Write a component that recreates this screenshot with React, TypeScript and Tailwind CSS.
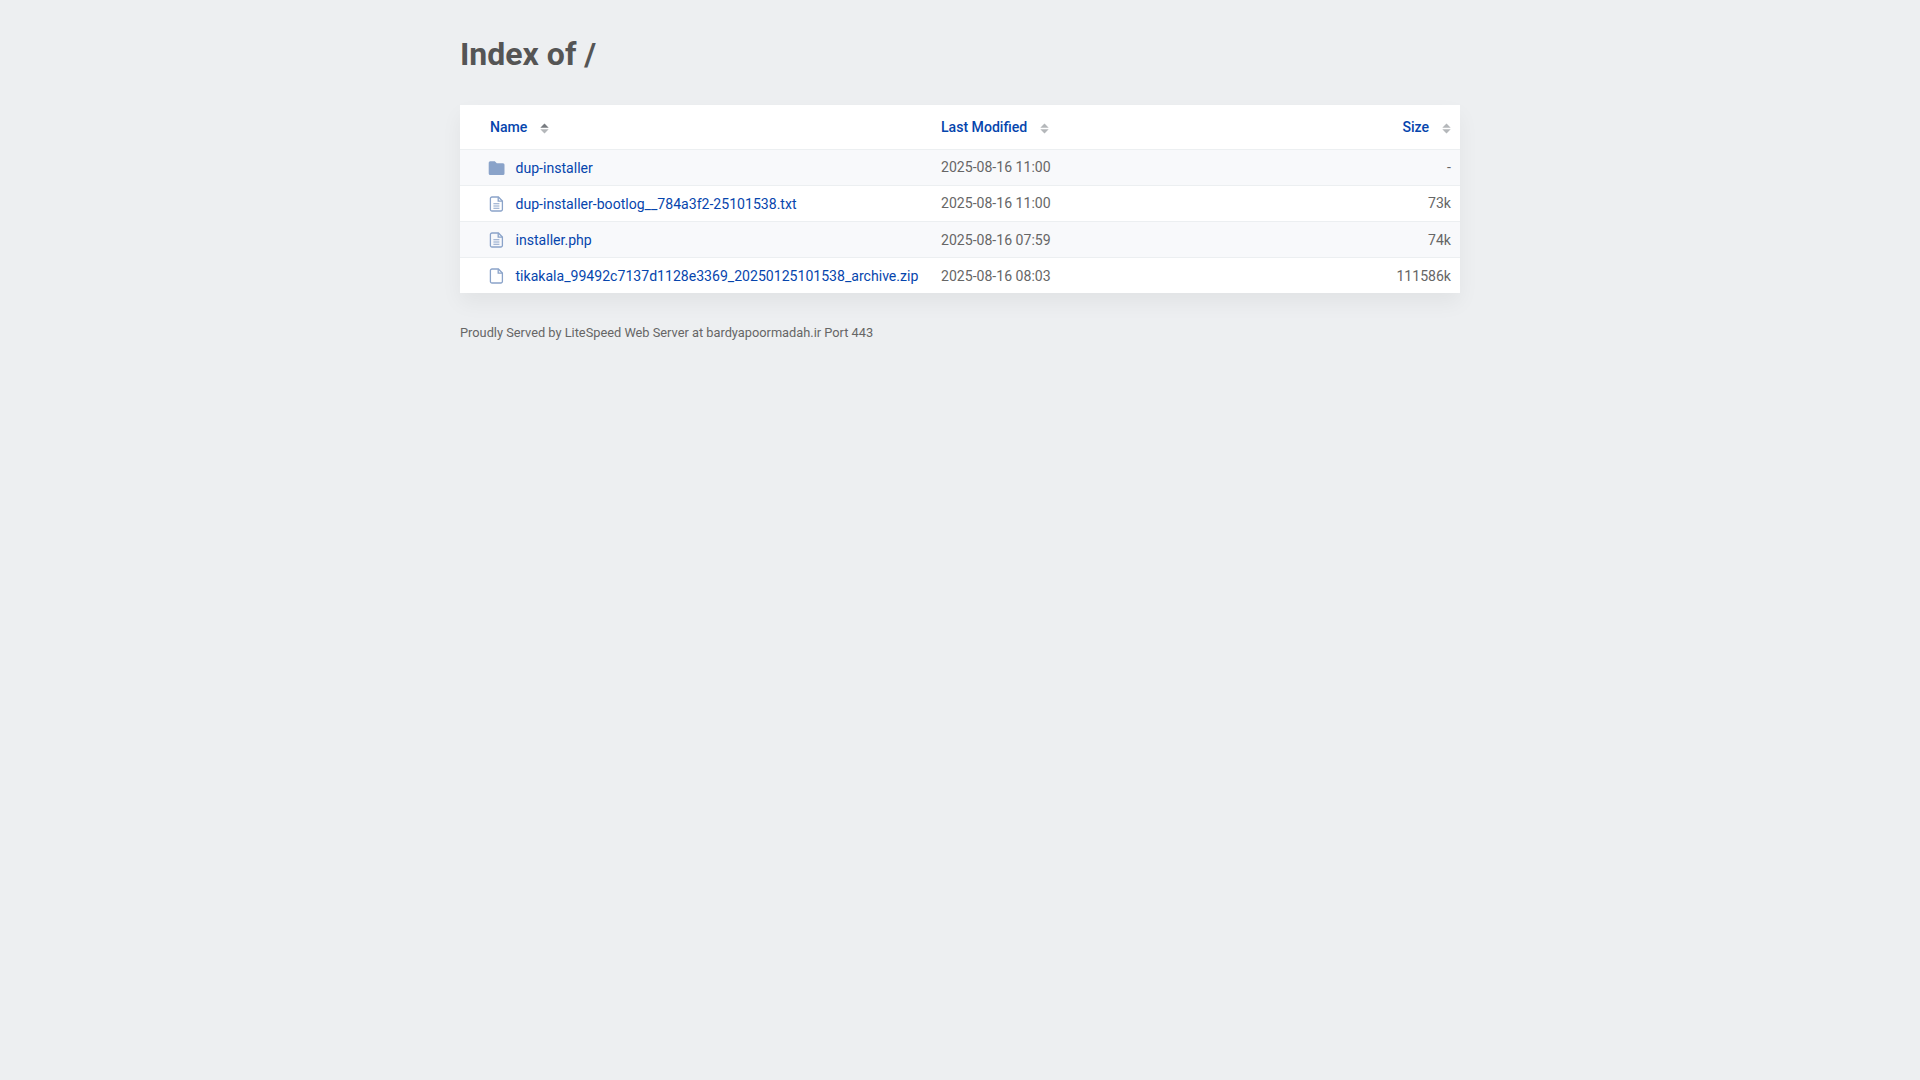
const rows = [
  { icon: "folder", name: "dup-installer", date: "2025-08-16 11:00", size: "-" },
  { icon: "text", name: "dup-installer-bootlog__784a3f2-25101538.txt", date: "2025-08-16 11:00", size: "73k" },
  { icon: "text", name: "installer.php", date: "2025-08-16 07:59", size: "74k" },
  { icon: "file", name: "tikakala_99492c7137d1128e3369_20250125101538_archive.zip", date: "2025-08-16 08:03", size: "111586k" },
];

function Sort({ active }: { active?: boolean }) {
  return (
    <svg width="9" height="11" viewBox="0 0 9 11" className="ml-[13px] mt-[3px] shrink-0">
      <path d="M4.5 0.5 L8.7 4.7 H0.3 Z" fill={active ? "#777b80" : "#b4b7ba"} />
      <path d="M0.3 6.3 H8.7 L4.5 10.5 Z" fill="#b4b7ba" />
    </svg>
  );
}

function Icon({ kind }: { kind: string }) {
  if (kind === "folder") {
    return (
      <svg width="16" height="14" viewBox="0 0 16 14" className="shrink-0 overflow-visible">
        <path d="M1.2 0.2 H5.8 L7.8 2.2 H14 A1.5 1.5 0 0 1 15.5 3.7 V12.4 A1.5 1.5 0 0 1 14 13.9 H1.2 A1.5 1.5 0 0 1 -0.3 12.4 V1.7 A1.5 1.5 0 0 1 1.2 0.2 Z" fill="#8aa3c9" />
      </svg>
    );
  }
  return (
    <svg width="16" height="16" viewBox="0 0 16 16" fill="none" className="shrink-0">
      <path d="M3 1 H9.4 L13.4 5 V13.4 A1.6 1.6 0 0 1 11.8 15 H3 A1.6 1.6 0 0 1 1.4 13.4 V2.6 A1.6 1.6 0 0 1 3 1 Z" stroke="#8aa3c9" strokeWidth="1.3" />
      <path d="M9.2 1.2 V5.2 H13.2" stroke="#8aa3c9" strokeWidth="1.3" />
      {kind === "text" && <path d="M4.4 7.8 H10.4 M4.4 10 H10.4 M4.4 12.2 H10.4" stroke="#8aa3c9" strokeWidth="1.1" />}
    </svg>
  );
}

export default function App() {
  return (
    <div className="min-h-screen bg-[#edeff1] font-['Roboto',sans-serif] text-[14.08px] text-[#666666]">
      <div className="mx-auto w-[1000px]">
        <h1 className="pt-[34px] pb-[31px] text-[32px] leading-[40px] font-bold text-[#555555]">Index of /</h1>
        <div className="bg-white shadow-[0_10px_20px_rgba(0,0,0,0.05)]">
          <div className="flex h-[45px] items-center border-b border-[#eceff1] pt-[1px] font-medium text-[#0645ad]">
            <div className="flex w-[481px] items-center pl-[30px]"><span>Name</span><Sort active /></div>
            <div className="flex flex-1 items-center"><span>Last Modified</span><Sort /></div>
            <div className="flex items-center pr-[9px]"><span>Size</span><Sort /></div>
          </div>
          {rows.map((r, i) => (
            <div key={r.name} className={`flex items-center pt-[1px] ${i < 3 ? "h-[36px] border-b border-[#eceff1]" : "h-[35px]"} ${i % 2 === 0 ? "bg-[#f8f9fb]" : "bg-white"}`}>
              <div className="flex w-[481px] items-center">
                <div className="ml-[29px] flex w-[26.5px] justify-start"><Icon kind={r.icon} /></div>
                <span className="mt-[1px] text-[#0645ad]">{r.name}</span>
              </div>
              <div className={`flex-1 ${i >= 2 ? "mt-[1px]" : ""}`}>{r.date}</div>
              <div className={`pr-[9px] ${i >= 2 ? "mt-[1px]" : ""}`}>{r.size}</div>
            </div>
          ))}
        </div>
        <p className="mt-[32px] text-[12.8px] leading-[16px]">Proudly Served by LiteSpeed Web Server at bardyapoormadah.ir Port 443</p>
      </div>
    </div>
  );
}
